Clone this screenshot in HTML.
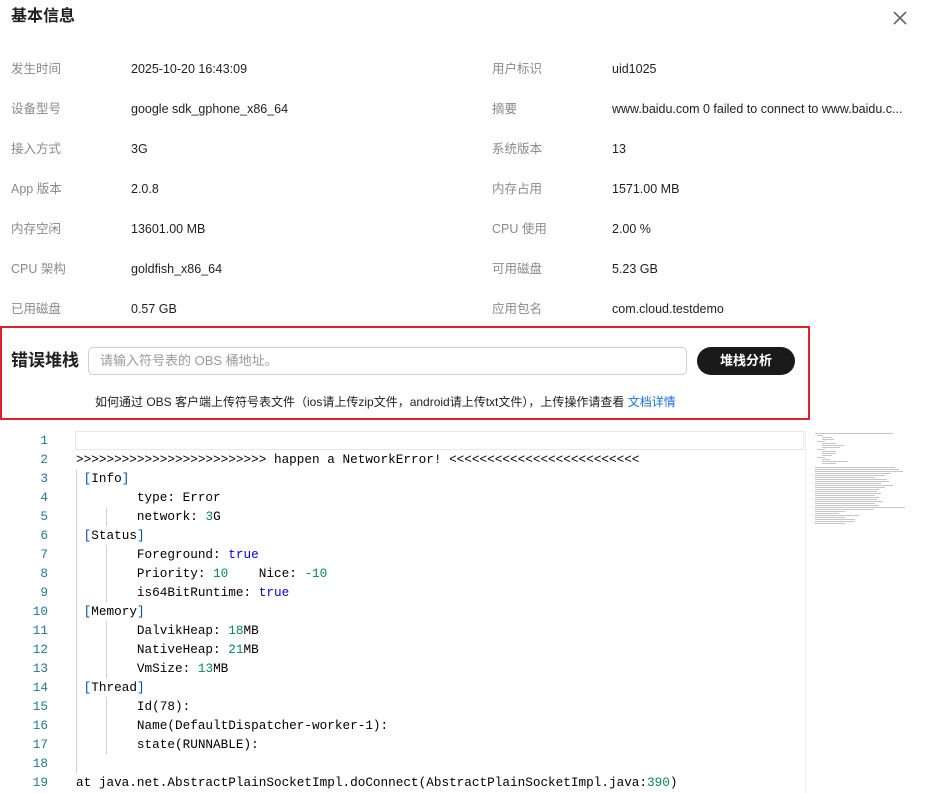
<!DOCTYPE html>
<html><head><meta charset="utf-8"><style>
body{margin:0;width:933px;height:793px;background:#fff;position:relative;overflow:hidden;font-family:"Liberation Sans","Noto Sans CJK SC",sans-serif;color:#1f1f1f}
.a{position:absolute;white-space:pre;line-height:16px}
.t{font-size:16px;font-weight:bold;line-height:18px}
.l{font-size:12.5px;color:#8a8a8a}
.v{font-size:12.5px;color:#1f1f1f}
.code{position:absolute;left:0;top:431px;font-family:"Liberation Mono","DejaVu Sans Mono",monospace;font-size:12.7px}
.ln{position:absolute;left:0;width:48px;text-align:right;color:#237893;height:19px;line-height:19px}
.cl{position:absolute;left:76px;height:19px;line-height:19px;white-space:pre;color:#000}
.b{color:#0451a5}.n{color:#098658}.k{color:#0000ff}
.g{position:absolute;width:1px;background:#d3d3d3}
</style></head><body>
<div class="a t" style="left:11px;top:8px">基本信息</div>
<svg class="a" style="left:892px;top:10px" width="16" height="16" viewBox="0 0 16 16"><path d="M2 2L14 14M14 2L2 14" stroke="#666" stroke-width="1.6"/></svg>

<div class="a l" style="left:11px;top:61px">发生时间</div><div class="a v" style="left:131px;top:61px">2025-10-20 16:43:09</div>
<div class="a l" style="left:492px;top:61px">用户标识</div><div class="a v" style="left:612px;top:61px">uid1025</div>
<div class="a l" style="left:11px;top:101px">设备型号</div><div class="a v" style="left:131px;top:101px">google sdk_gphone_x86_64</div>
<div class="a l" style="left:492px;top:101px">摘要</div><div class="a v" style="left:612px;top:101px">www.baidu.com 0 failed to connect to www.baidu.c...</div>
<div class="a l" style="left:11px;top:141px">接入方式</div><div class="a v" style="left:131px;top:141px">3G</div>
<div class="a l" style="left:492px;top:141px">系统版本</div><div class="a v" style="left:612px;top:141px">13</div>
<div class="a l" style="left:11px;top:181px">App 版本</div><div class="a v" style="left:131px;top:181px">2.0.8</div>
<div class="a l" style="left:492px;top:181px">内存占用</div><div class="a v" style="left:612px;top:181px">1571.00 MB</div>
<div class="a l" style="left:11px;top:221px">内存空闲</div><div class="a v" style="left:131px;top:221px">13601.00 MB</div>
<div class="a l" style="left:492px;top:221px">CPU 使用</div><div class="a v" style="left:612px;top:221px">2.00 %</div>
<div class="a l" style="left:11px;top:261px">CPU 架构</div><div class="a v" style="left:131px;top:261px">goldfish_x86_64</div>
<div class="a l" style="left:492px;top:261px">可用磁盘</div><div class="a v" style="left:612px;top:261px">5.23 GB</div>
<div class="a l" style="left:11px;top:301px">已用磁盘</div><div class="a v" style="left:131px;top:301px">0.57 GB</div>
<div class="a l" style="left:492px;top:301px">应用包名</div><div class="a v" style="left:612px;top:301px">com.cloud.testdemo</div>

<div class="a" style="left:0;top:326px;width:806px;height:90px;border:2px solid #e0202a"></div>
<div class="a t" style="left:11px;top:352px;font-size:17px">错误堆栈</div>
<div class="a" style="left:88px;top:347px;width:597px;height:26px;border:1px solid #cfcfcf;border-radius:5px"></div>
<div class="a" style="left:100px;top:353px;font-size:13px;color:#9a9a9a">请输入符号表的 OBS 桶地址。</div>
<div class="a" style="left:697px;top:347px;width:98px;height:28px;background:#1a1a1a;border-radius:14px;color:#fff;font-size:13px;font-weight:bold;text-align:center;line-height:28px">堆栈分析</div>
<div class="a" style="left:95px;top:394px;font-size:12px;color:#1f1f1f">如何通过 OBS 客户端上传符号表文件（ios请上传zip文件，android请上传txt文件），上传操作请查看 <span style="color:#1a73e8">文档详情</span></div>

<div class="a" style="left:75px;top:431px;width:727px;height:17px;border:1px solid #e8e8e8"></div>
<div class="g" style="left:76px;top:469px;height:304px"></div>
<div class="g" style="left:106px;top:507px;height:19px"></div>
<div class="g" style="left:106px;top:545px;height:57px"></div>
<div class="g" style="left:106px;top:621px;height:57px"></div>
<div class="g" style="left:106px;top:697px;height:57px"></div>
<div class="code" style="width:933px">
<div class="ln" style="top:0">1</div>
<div class="ln" style="top:19px">2</div><div class="cl" style="top:19px">&gt;&gt;&gt;&gt;&gt;&gt;&gt;&gt;&gt;&gt;&gt;&gt;&gt;&gt;&gt;&gt;&gt;&gt;&gt;&gt;&gt;&gt;&gt;&gt;&gt; happen a NetworkError! &lt;&lt;&lt;&lt;&lt;&lt;&lt;&lt;&lt;&lt;&lt;&lt;&lt;&lt;&lt;&lt;&lt;&lt;&lt;&lt;&lt;&lt;&lt;&lt;&lt;</div>
<div class="ln" style="top:38px">3</div><div class="cl" style="top:38px"> <span class="b">[</span>Info<span class="b">]</span></div>
<div class="ln" style="top:57px">4</div><div class="cl" style="top:57px">        type: Error</div>
<div class="ln" style="top:76px">5</div><div class="cl" style="top:76px">        network: <span class="n">3</span>G</div>
<div class="ln" style="top:95px">6</div><div class="cl" style="top:95px"> <span class="b">[</span>Status<span class="b">]</span></div>
<div class="ln" style="top:114px">7</div><div class="cl" style="top:114px">        Foreground: <span class="k">true</span></div>
<div class="ln" style="top:133px">8</div><div class="cl" style="top:133px">        Priority: <span class="n">10</span>    Nice: <span class="n">-10</span></div>
<div class="ln" style="top:152px">9</div><div class="cl" style="top:152px">        is64BitRuntime: <span class="k">true</span></div>
<div class="ln" style="top:171px">10</div><div class="cl" style="top:171px"> <span class="b">[</span>Memory<span class="b">]</span></div>
<div class="ln" style="top:190px">11</div><div class="cl" style="top:190px">        DalvikHeap: <span class="n">18</span>MB</div>
<div class="ln" style="top:209px">12</div><div class="cl" style="top:209px">        NativeHeap: <span class="n">21</span>MB</div>
<div class="ln" style="top:228px">13</div><div class="cl" style="top:228px">        VmSize: <span class="n">13</span>MB</div>
<div class="ln" style="top:247px">14</div><div class="cl" style="top:247px"> <span class="b">[</span>Thread<span class="b">]</span></div>
<div class="ln" style="top:266px">15</div><div class="cl" style="top:266px">        Id(78):</div>
<div class="ln" style="top:285px">16</div><div class="cl" style="top:285px">        Name(DefaultDispatcher-worker-1):</div>
<div class="ln" style="top:304px">17</div><div class="cl" style="top:304px">        state(RUNNABLE):</div>
<div class="ln" style="top:323px">18</div>
<div class="ln" style="top:342px">19</div><div class="cl" style="top:342px">at java.net.AbstractPlainSocketImpl.doConnect(AbstractPlainSocketImpl.java:<span class="n">390</span>)</div>
</div>

<div class="a" style="left:805px;top:431px;width:1px;height:362px;background:#eee"></div>
<svg class="a" style="left:812px;top:432px" width="100" height="100">
<g fill="#999" opacity="0.55">
<rect x="3" y="1" width="78" height="1"/><rect x="5" y="3" width="6" height="1"/><rect x="10" y="5" width="10" height="1"/><rect x="10" y="7" width="12" height="1"/>
<rect x="5" y="9" width="8" height="1"/><rect x="10" y="11" width="14" height="1"/><rect x="10" y="13" width="22" height="1"/><rect x="10" y="15" width="18" height="1"/>
<rect x="5" y="17" width="8" height="1"/><rect x="10" y="19" width="14" height="1"/><rect x="10" y="21" width="14" height="1"/><rect x="10" y="23" width="10" height="1"/>
<rect x="5" y="25" width="8" height="1"/><rect x="10" y="27" width="8" height="1"/><rect x="10" y="29" width="26" height="1"/><rect x="10" y="31" width="14" height="1"/>
<rect x="3" y="35" width="80" height="1"/><rect x="3" y="37" width="84" height="1"/><rect x="3" y="39" width="88" height="1"/><rect x="3" y="41" width="76" height="1"/>
<rect x="3" y="43" width="70" height="1"/><rect x="3" y="45" width="60" height="1"/><rect x="3" y="47" width="72" height="1"/><rect x="3" y="49" width="74" height="1"/>
<rect x="3" y="51" width="66" height="1"/><rect x="3" y="53" width="78" height="1"/><rect x="3" y="55" width="70" height="1"/><rect x="3" y="57" width="64" height="1"/>
<rect x="3" y="59" width="62" height="1"/><rect x="3" y="61" width="66" height="1"/><rect x="3" y="63" width="60" height="1"/><rect x="3" y="65" width="64" height="1"/>
<rect x="3" y="67" width="62" height="1"/><rect x="3" y="69" width="68" height="1"/><rect x="3" y="71" width="60" height="1"/><rect x="3" y="73" width="64" height="1"/>
<rect x="3" y="75" width="90" height="1"/><rect x="3" y="77" width="58" height="1"/><rect x="3" y="79" width="30" height="1"/><rect x="3" y="81" width="24" height="1"/>
<rect x="3" y="83" width="44" height="1"/><rect x="3" y="85" width="30" height="1"/><rect x="3" y="87" width="40" height="1"/><rect x="3" y="89" width="40" height="1"/><rect x="3" y="91" width="30" height="1"/>
</g></svg>
</body></html>
